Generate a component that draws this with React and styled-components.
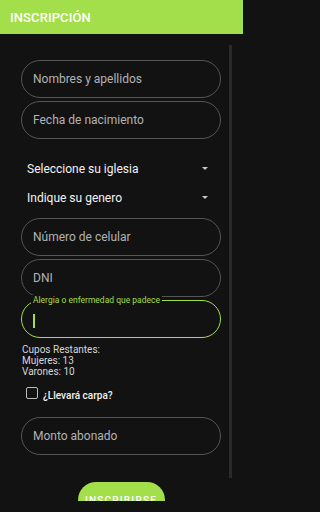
import React from "react";
import styled, { createGlobalStyle } from "styled-components";

const green = "#a3de4b";

const GlobalStyle = createGlobalStyle`
  html, body {
    margin: 0;
    padding: 0;
    background: #121212;
    font-family: Roboto, "Liberation Sans", sans-serif;
  }
  * { box-sizing: border-box; }
`;

function App() {
  return (
    <Page>
      <GlobalStyle />
      <Header>
        <Title>INSCRIPCIÓN</Title>
      </Header>
      <Scroll>
        <Form>
          <Field placeholder="Nombres y apellidos" />
          <Field placeholder="Fecha de nacimiento" />

          <Selects>
            <SelectRow>
              <span>Seleccione su iglesia</span>
              <Arrow />
            </SelectRow>
            <SelectRow>
              <span>Indique su genero</span>
              <Arrow />
            </SelectRow>
          </Selects>

          <Field placeholder="Número de celular" />
          <Field placeholder="DNI" />
          <Focused>
            <FloatLabel>Alergia o enfermedad que padece</FloatLabel>
            <Caret />
          </Focused>

          <Cupos>
            <div>Cupos Restantes:</div>
            <div>Mujeres: 13</div>
            <div>Varones: 10</div>
          </Cupos>

          <CheckRow>
            <Box />
            <CheckLabel>¿Llevará carpa?</CheckLabel>
          </CheckRow>

          <Field $top={14} placeholder="Monto abonado" />

          <Submit>INSCRIBIRSE</Submit>
        </Form>
        <Thumb />
      </Scroll>
    </Page>
  );
}

const Page = styled.div`
  width: 243px;
  height: 512px;
  background: #121212;
  overflow: hidden;
`;

const Header = styled.div`
  height: 34px;
  background: ${green};
  display: flex;
  align-items: center;
  padding-left: 10px;
`;

const Title = styled.h1`
  margin: 0;
  color: #fff;
  font-size: 13px;
  font-weight: 500;
  letter-spacing: 0.1px;
`;

const Scroll = styled.div`
  position: relative;
  height: 467px;
  overflow: hidden;
`;

const Thumb = styled.div`
  position: absolute;
  left: 229px;
  top: 11px;
  width: 3px;
  height: 433px;
  background: #2a2a2a;
`;

const Form = styled.div`
  display: flex;
  flex-direction: column;
  gap: 3px;
  width: 200px;
  margin-left: 21px;
  padding-top: 26px;
`;

const Field = styled.input`
  height: 38px;
  width: 100%;
  margin-top: ${p => (p.$top || 0)}px;
  border: 1px solid #555;
  border-radius: 19px;
  background: transparent;
  padding: 0 11px;
  font-family: inherit;
  font-size: 12px;
  color: #ddd;
  outline: none;
  &::placeholder {
    color: #b3b3b3;
  }
`;

const Selects = styled.div`
  display: flex;
  flex-direction: column;
  margin: 12px 0 3px;
`;

const SelectRow = styled.div`
  height: 29px;
  display: flex;
  align-items: center;
  justify-content: space-between;
  padding: 0 13px 0 6px;
  color: #f2f2f2;
  font-size: 12px;
`;

const Arrow = styled.span`
  width: 0;
  height: 0;
  border-left: 3px solid transparent;
  border-right: 3px solid transparent;
  border-top: 3px solid #c8c8c8;
`;

const Focused = styled.div`
  position: relative;
  height: 38px;
  border: 1.5px solid ${green};
  border-radius: 19px;
  display: flex;
  align-items: center;
  padding-left: 11px;
`;

const FloatLabel = styled.span`
  position: absolute;
  top: -6px;
  left: 9px;
  padding: 0 2px;
  background: #121212;
  color: ${green};
  font-size: 8.5px;
  line-height: 10px;
`;

const Caret = styled.span`
  width: 1.5px;
  height: 14px;
  margin-top: 4px;
  background: ${green};
`;

const Cupos = styled.div`
  margin-top: 3px;
  padding-left: 1px;
  color: #d6d6d6;
  font-size: 10px;
  line-height: 11px;
`;

const CheckRow = styled.div`
  display: flex;
  align-items: center;
  gap: 5px;
  margin-top: 6px;
  padding-left: 5px;
  height: 14px;
`;

const Box = styled.span`
  width: 12px;
  height: 12px;
  border: 1.5px solid #bdbdbd;
  border-radius: 2px;
`;

const CheckLabel = styled.span`
  margin-top: 4px;
  color: #f2f2f2;
  font-size: 10px;
  font-weight: 500;
`;

const Submit = styled.button`
  align-self: center;
  margin-top: 24px;
  width: 87px;
  height: 36px;
  border: none;
  border-radius: 18px;
  background: ${green};
  color: #fff;
  font-family: inherit;
  font-size: 10px;
  font-weight: 500;
  letter-spacing: 1.2px;
  padding: 0;
`;

export default App;
